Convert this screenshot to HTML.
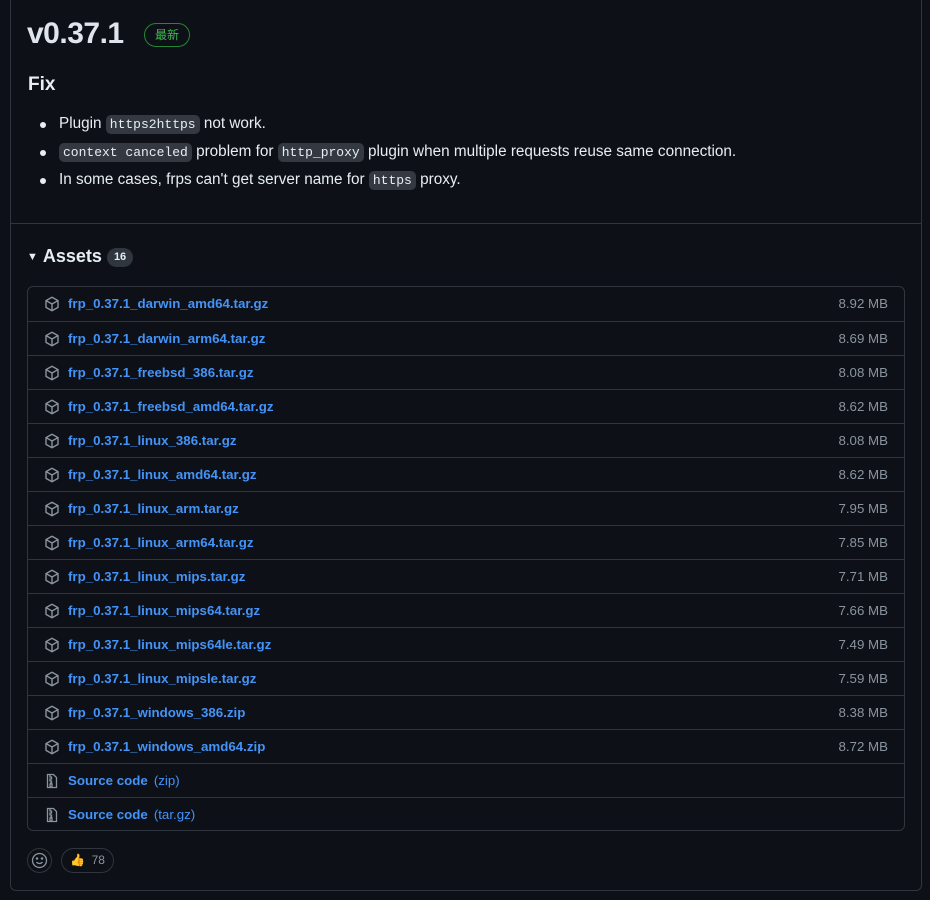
<!DOCTYPE html>
<html><head><meta charset="utf-8">
<style>
*{box-sizing:border-box;margin:0;padding:0}
body{width:930px;height:900px;background:#0d1117;font-family:"Liberation Sans","Noto Sans CJK SC",sans-serif;color:#e6edf3;position:relative;overflow:hidden}
.box{position:absolute;left:10px;top:-10px;width:912px;height:901px;border:1px solid #30363d;border-radius:6px}
h1{position:absolute;left:27px;top:14px;font-size:30px;font-weight:600;letter-spacing:-0.5px;line-height:40px;color:#dfe5ec}
.latest{position:absolute;left:144px;top:23px;width:46px;height:24px;border:1px solid #238636;border-radius:12px;color:#3fb950;font-size:12px;text-align:center;line-height:22px}
h2{position:absolute;left:28px;top:74px;font-size:19px;font-weight:600}
ul{position:absolute;left:38px;top:112px;list-style:none;font-size:15.3px}
li{height:28px;line-height:24px;position:relative;padding-left:21px;white-space:nowrap}
li:before{content:"";position:absolute;left:2px;top:10px;width:6px;height:6px;border-radius:3px;background:#e6edf3}
code{font-family:"Liberation Mono",monospace;font-size:13px;background:#343941;border-radius:5px;padding:2px 4px}
.hr{position:absolute;left:11px;top:223px;width:910px;height:1px;background:#30363d}
.assets{position:absolute;left:27px;top:246px;font-size:18px;font-weight:600}
.assets .tri{font-size:11px;margin-right:5px;vertical-align:2px}
.cnt{display:inline-block;background:#30363d;border-radius:10px;font-size:11px;padding:0 7px;height:19px;line-height:19px;vertical-align:2px;margin-left:5px}
.list{position:absolute;left:27px;top:286px;width:878px;height:545px;border:1px solid #30363d;border-radius:6px}
.row{height:34px;border-top:1px solid #30363d;position:relative;font-size:13.3px;line-height:33px}
.row:first-child{border-top:none}
.row svg{position:absolute;left:16px;top:9px}
.row a{position:absolute;left:40px;color:#4493f8;font-weight:600;text-decoration:none}
.row span.sz{position:absolute;right:16px;color:#8b949e}
.row span.ext{color:#4493f8;font-weight:400;margin-left:6px}
.emo{position:absolute;left:27px;top:848px;width:25px;height:25px;border:1px solid #30363d;border-radius:13px}
.react{position:absolute;left:61px;top:848px;width:53px;height:25px;border:1px solid #30363d;border-radius:13px;font-size:12px;color:#8b949e;line-height:23px;padding-left:8px}
</style></head><body>
<div class="box"></div>
<h1>v0.37.1</h1>
<div class="latest">最新</div>
<h2>Fix</h2>
<ul>
<li>Plugin <code>https2https</code> not work.</li>
<li><code>context canceled</code> problem for <code>http_proxy</code> plugin when multiple requests reuse same connection.</li>
<li>In some cases, frps can't get server name for <code>https</code> proxy.</li>
</ul>
<div class="hr"></div>
<div class="assets"><span class="tri">▼</span>Assets<span class="cnt">16</span></div>
<div class="list">
<div class="row"><svg width="16" height="16" viewBox="0 0 16 16" fill="none" stroke="#8b949e" stroke-width="1.4" stroke-linejoin="round"><path d="M8 1.3 14 4.6v6.8L8 14.7 2 11.4V4.6z M2.2 4.7 8 8l5.8-3.3 M8 8v6.6"/></svg><a>frp_0.37.1_darwin_amd64.tar.gz</a><span class="sz">8.92 MB</span></div>
<div class="row"><svg width="16" height="16" viewBox="0 0 16 16" fill="none" stroke="#8b949e" stroke-width="1.4" stroke-linejoin="round"><path d="M8 1.3 14 4.6v6.8L8 14.7 2 11.4V4.6z M2.2 4.7 8 8l5.8-3.3 M8 8v6.6"/></svg><a>frp_0.37.1_darwin_arm64.tar.gz</a><span class="sz">8.69 MB</span></div>
<div class="row"><svg width="16" height="16" viewBox="0 0 16 16" fill="none" stroke="#8b949e" stroke-width="1.4" stroke-linejoin="round"><path d="M8 1.3 14 4.6v6.8L8 14.7 2 11.4V4.6z M2.2 4.7 8 8l5.8-3.3 M8 8v6.6"/></svg><a>frp_0.37.1_freebsd_386.tar.gz</a><span class="sz">8.08 MB</span></div>
<div class="row"><svg width="16" height="16" viewBox="0 0 16 16" fill="none" stroke="#8b949e" stroke-width="1.4" stroke-linejoin="round"><path d="M8 1.3 14 4.6v6.8L8 14.7 2 11.4V4.6z M2.2 4.7 8 8l5.8-3.3 M8 8v6.6"/></svg><a>frp_0.37.1_freebsd_amd64.tar.gz</a><span class="sz">8.62 MB</span></div>
<div class="row"><svg width="16" height="16" viewBox="0 0 16 16" fill="none" stroke="#8b949e" stroke-width="1.4" stroke-linejoin="round"><path d="M8 1.3 14 4.6v6.8L8 14.7 2 11.4V4.6z M2.2 4.7 8 8l5.8-3.3 M8 8v6.6"/></svg><a>frp_0.37.1_linux_386.tar.gz</a><span class="sz">8.08 MB</span></div>
<div class="row"><svg width="16" height="16" viewBox="0 0 16 16" fill="none" stroke="#8b949e" stroke-width="1.4" stroke-linejoin="round"><path d="M8 1.3 14 4.6v6.8L8 14.7 2 11.4V4.6z M2.2 4.7 8 8l5.8-3.3 M8 8v6.6"/></svg><a>frp_0.37.1_linux_amd64.tar.gz</a><span class="sz">8.62 MB</span></div>
<div class="row"><svg width="16" height="16" viewBox="0 0 16 16" fill="none" stroke="#8b949e" stroke-width="1.4" stroke-linejoin="round"><path d="M8 1.3 14 4.6v6.8L8 14.7 2 11.4V4.6z M2.2 4.7 8 8l5.8-3.3 M8 8v6.6"/></svg><a>frp_0.37.1_linux_arm.tar.gz</a><span class="sz">7.95 MB</span></div>
<div class="row"><svg width="16" height="16" viewBox="0 0 16 16" fill="none" stroke="#8b949e" stroke-width="1.4" stroke-linejoin="round"><path d="M8 1.3 14 4.6v6.8L8 14.7 2 11.4V4.6z M2.2 4.7 8 8l5.8-3.3 M8 8v6.6"/></svg><a>frp_0.37.1_linux_arm64.tar.gz</a><span class="sz">7.85 MB</span></div>
<div class="row"><svg width="16" height="16" viewBox="0 0 16 16" fill="none" stroke="#8b949e" stroke-width="1.4" stroke-linejoin="round"><path d="M8 1.3 14 4.6v6.8L8 14.7 2 11.4V4.6z M2.2 4.7 8 8l5.8-3.3 M8 8v6.6"/></svg><a>frp_0.37.1_linux_mips.tar.gz</a><span class="sz">7.71 MB</span></div>
<div class="row"><svg width="16" height="16" viewBox="0 0 16 16" fill="none" stroke="#8b949e" stroke-width="1.4" stroke-linejoin="round"><path d="M8 1.3 14 4.6v6.8L8 14.7 2 11.4V4.6z M2.2 4.7 8 8l5.8-3.3 M8 8v6.6"/></svg><a>frp_0.37.1_linux_mips64.tar.gz</a><span class="sz">7.66 MB</span></div>
<div class="row"><svg width="16" height="16" viewBox="0 0 16 16" fill="none" stroke="#8b949e" stroke-width="1.4" stroke-linejoin="round"><path d="M8 1.3 14 4.6v6.8L8 14.7 2 11.4V4.6z M2.2 4.7 8 8l5.8-3.3 M8 8v6.6"/></svg><a>frp_0.37.1_linux_mips64le.tar.gz</a><span class="sz">7.49 MB</span></div>
<div class="row"><svg width="16" height="16" viewBox="0 0 16 16" fill="none" stroke="#8b949e" stroke-width="1.4" stroke-linejoin="round"><path d="M8 1.3 14 4.6v6.8L8 14.7 2 11.4V4.6z M2.2 4.7 8 8l5.8-3.3 M8 8v6.6"/></svg><a>frp_0.37.1_linux_mipsle.tar.gz</a><span class="sz">7.59 MB</span></div>
<div class="row"><svg width="16" height="16" viewBox="0 0 16 16" fill="none" stroke="#8b949e" stroke-width="1.4" stroke-linejoin="round"><path d="M8 1.3 14 4.6v6.8L8 14.7 2 11.4V4.6z M2.2 4.7 8 8l5.8-3.3 M8 8v6.6"/></svg><a>frp_0.37.1_windows_386.zip</a><span class="sz">8.38 MB</span></div>
<div class="row"><svg width="16" height="16" viewBox="0 0 16 16" fill="none" stroke="#8b949e" stroke-width="1.4" stroke-linejoin="round"><path d="M8 1.3 14 4.6v6.8L8 14.7 2 11.4V4.6z M2.2 4.7 8 8l5.8-3.3 M8 8v6.6"/></svg><a>frp_0.37.1_windows_amd64.zip</a><span class="sz">8.72 MB</span></div>
<div class="row"><svg width="16" height="16" viewBox="0 0 16 16" fill="none" stroke="#8b949e" stroke-width="1.3"><path d="M3.5 1.5h6l3 3v10h-9z M6 2v2h1.5v2H6v2h1.5v2H6 M6 11h2v3H6z"/></svg><a>Source code<span class="ext">(zip)</span></a></div>
<div class="row"><svg width="16" height="16" viewBox="0 0 16 16" fill="none" stroke="#8b949e" stroke-width="1.3"><path d="M3.5 1.5h6l3 3v10h-9z M6 2v2h1.5v2H6v2h1.5v2H6 M6 11h2v3H6z"/></svg><a>Source code<span class="ext">(tar.gz)</span></a></div>
</div>
<div class="emo"><svg width="23" height="23" viewBox="0 0 23 23" fill="none" stroke="#8b949e" stroke-width="1.3"><circle cx="11.5" cy="11.5" r="7"/><path d="M8.5 13c1.5 2 4.5 2 6 0"/><circle cx="9" cy="9.5" r=".6" fill="#8b949e"/><circle cx="14" cy="9.5" r=".6" fill="#8b949e"/></svg></div>
<div class="react"><span style="font-size:12px">👍</span> &nbsp;78</div>
</body></html>
